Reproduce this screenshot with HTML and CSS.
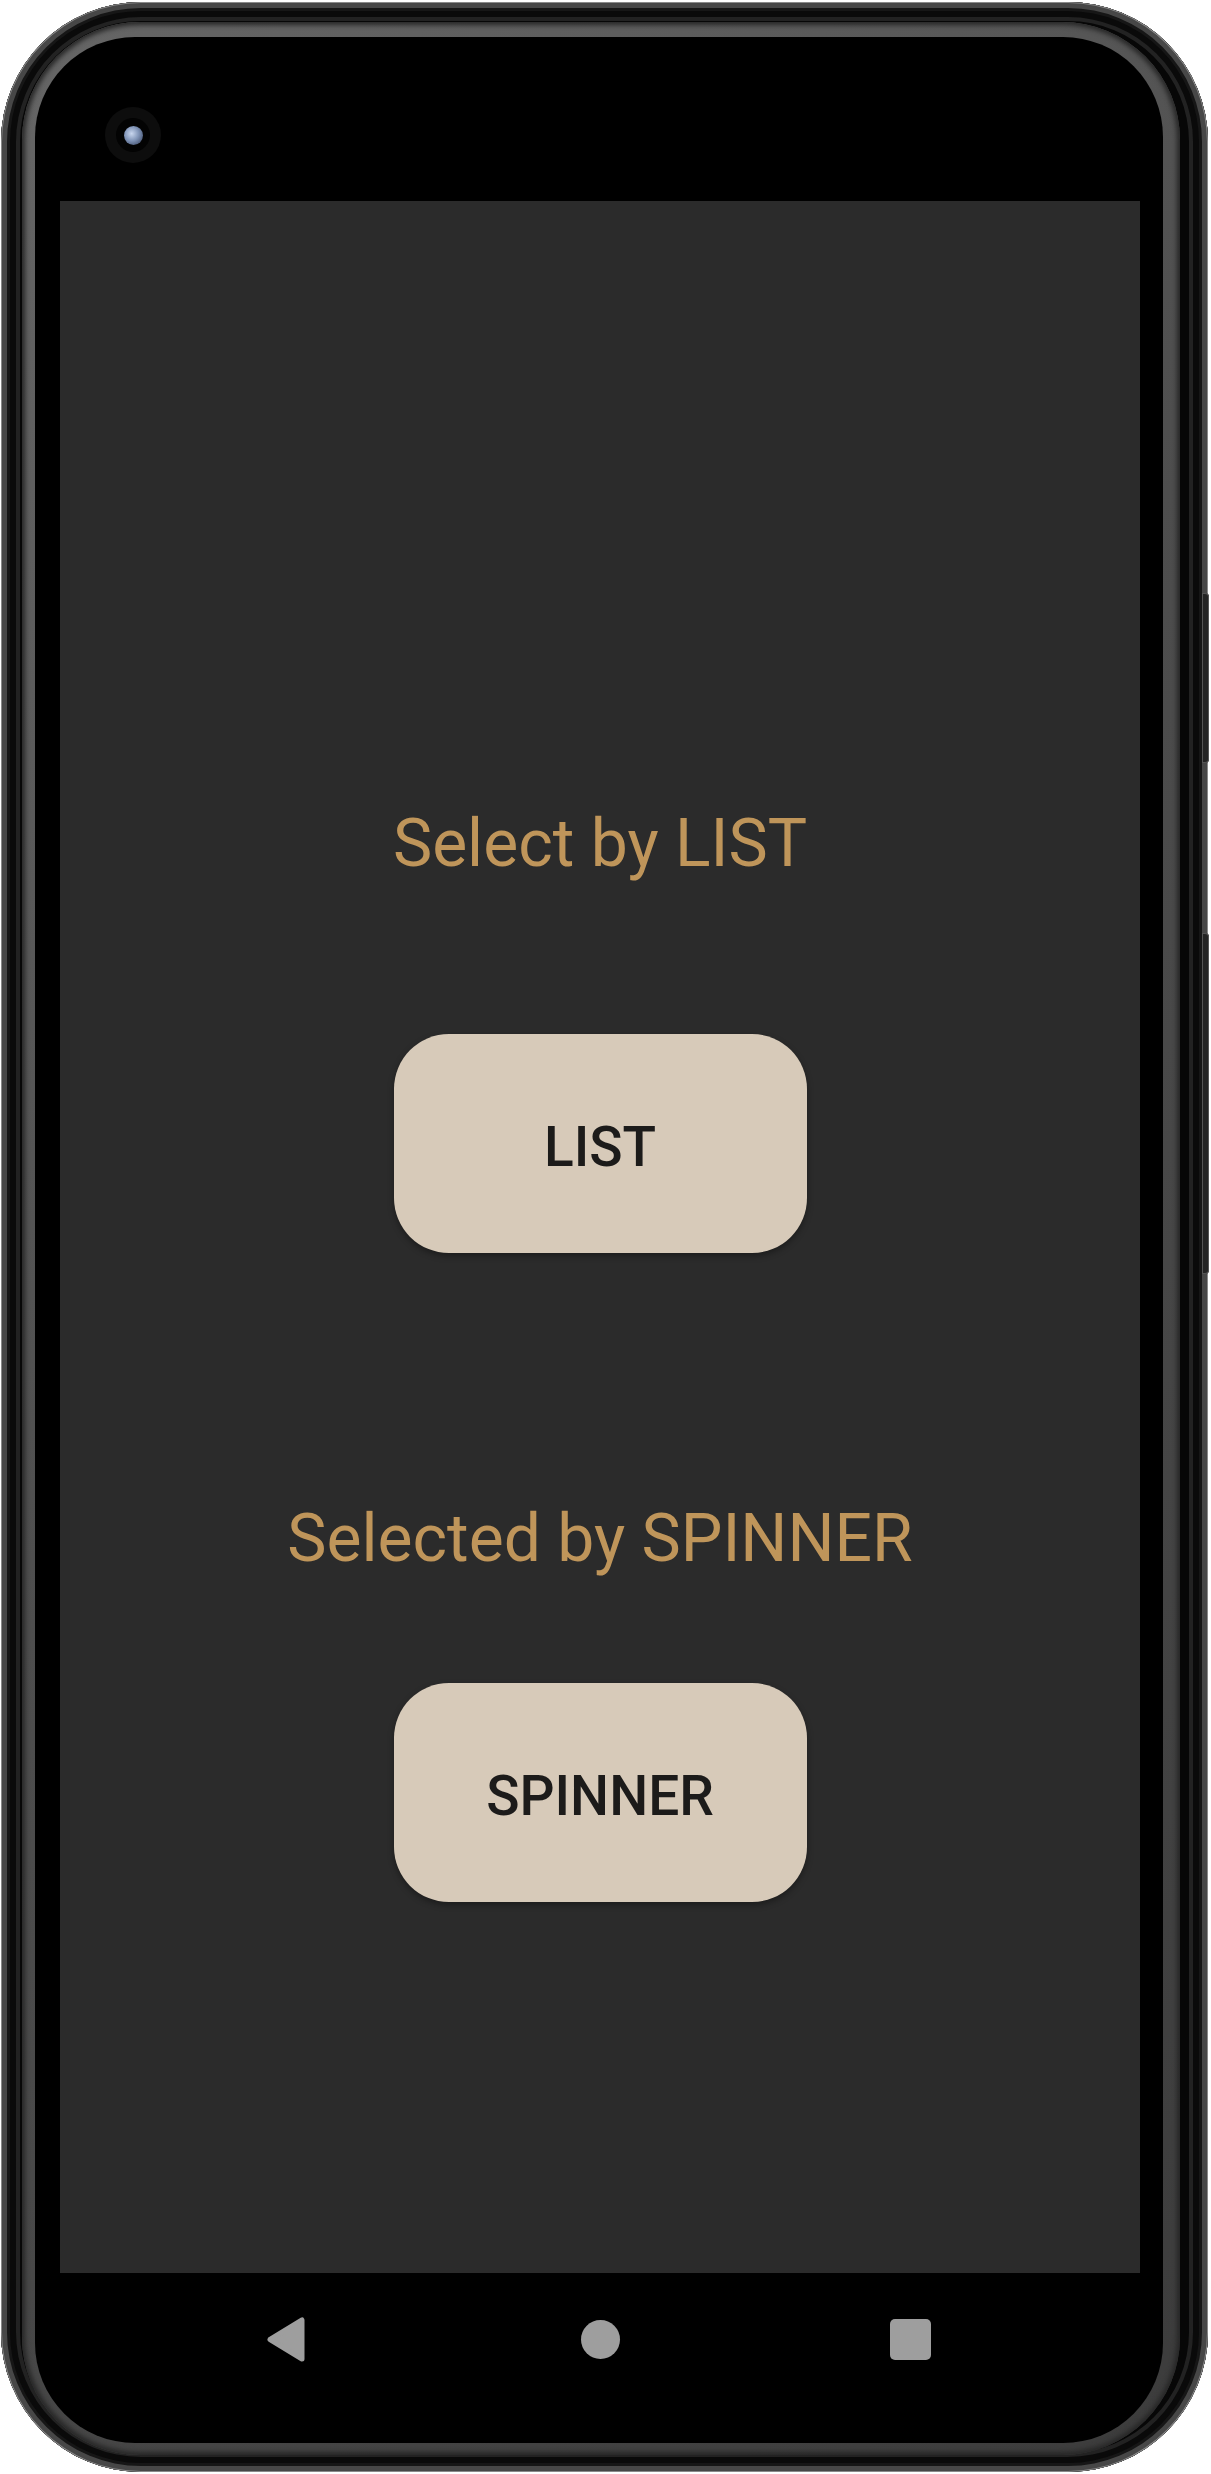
FILE: index.html
```html
<!DOCTYPE html>
<html lang="en">
<head>
<meta charset="utf-8">
<title>Select by LIST</title>
<link rel="stylesheet" href="styles.css">
</head>
<body>
<div class="phone">
  <div class="side-btn power"></div>
  <div class="side-btn volume"></div>
  <div class="band">
    <div class="glass">
      <div class="top-bezel">
        <div class="camera"><div class="camera-ring"><div class="lens"></div></div></div>
      </div>
      <main class="screen">
        <p class="label">Select by LIST</p>
        <button class="action action-list">LIST</button>
        <p class="label label-spinner">Selected by SPINNER</p>
        <button class="action action-spinner">SPINNER</button>
      </main>
      <nav class="navbar">
        <svg class="nav-back" width="38" height="45" viewBox="0 0 38 45"><polygon points="3,22.5 35,3 35,42" fill="#9e9e9e" stroke="#9e9e9e" stroke-width="5" stroke-linejoin="round"/></svg>
        <span class="nav-home"></span>
        <span class="nav-recents"></span>
      </nav>
    </div>
  </div>
</div>
</body>
</html>
```

FILE: styles.css
```css
html, body {
  margin: 0;
  padding: 0;
  background: #ffffff;
}

.phone {
  position: relative;
  box-sizing: border-box;
  width: 1207px;
  height: 2470px;
  margin: 2px 0 0 1px;
  padding: 20px 28px 17px 21px;
  border-radius: 140px;
  background: #070707;
  box-shadow:
    inset 0 0 0 1px #8a8a8a,
    inset 0 0 0 6px #474747,
    inset 0 0 0 9px #161616,
    inset 0 0 0 15px #0a0a0a,
    inset 0 0 0 19px #222222;
}

.side-btn {
  position: absolute;
  left: 1201px;
  width: 7px;
  border-radius: 0 4px 4px 0;
  background: #242424;
  box-shadow: inset 0 0 0 1px #555555;
}

.power {
  top: 591px;
  height: 170px;
}

.volume {
  top: 931px;
  height: 341px;
}

.band {
  box-sizing: border-box;
  height: 100%;
  padding: 15px 17px 12px 13px;
  border-radius: 118px;
  background: linear-gradient(135deg, #666666 0%, #4e4e4e 45%, #3c3c3c 100%);
  box-shadow: inset 0 0 5px 3px #262626;
}

.glass {
  box-sizing: border-box;
  height: 100%;
  padding: 0 23px 0 25px;
  border-radius: 100px;
  background: #000000;
  display: flex;
  flex-direction: column;
}

.top-bezel {
  height: 164px;
  flex: none;
  box-sizing: border-box;
  padding: 70px 0 0 45px;
}

.camera {
  width: 56px;
  height: 56px;
  border-radius: 50%;
  background: #0d0d0d;
  display: flex;
  align-items: center;
  justify-content: center;
}

.camera-ring {
  width: 34px;
  height: 34px;
  border-radius: 50%;
  background: #030303;
  display: flex;
  align-items: center;
  justify-content: center;
}

.lens {
  width: 19px;
  height: 19px;
  border-radius: 50%;
  background: radial-gradient(circle at 40% 40%, #c8d6ee 0%, #7f93b6 45%, #2a3550 100%);
}

.screen {
  flex: none;
  width: 1080px;
  height: 2072px;
  box-sizing: border-box;
  padding-top: 604px;
  background: #2b2b2b;
  display: flex;
  flex-direction: column;
  align-items: center;
}

.label {
  margin: 0;
  font-family: Roboto, "Noto Sans", sans-serif;
  font-weight: 400;
  font-size: 66px;
  line-height: 77px;
  color: #bf955a;
  white-space: nowrap;
}

.label-spinner {
  margin-top: 247px;
}

.action {
  box-sizing: border-box;
  width: 413px;
  height: 219px;
  margin: 0;
  padding: 7px 0 0 0;
  border: none;
  border-radius: 55px;
  background: #d7cab9;
  color: #1c1b1a;
  font-family: Roboto, "Noto Sans", sans-serif;
  font-weight: 500;
  font-size: 55px;
  letter-spacing: 0;
  box-shadow: 0 3px 6px rgba(0, 0, 0, 0.35);
}

.action-list {
  margin-top: 152px;
}

.action-spinner {
  margin-top: 106px;
}

.navbar {
  flex: none;
  height: 170px;
  box-sizing: border-box;
  padding: 0 0 37px 207px;
  display: flex;
  align-items: center;
}

.nav-back {
  display: block;
  flex: none;
}

.nav-home {
  flex: none;
  width: 39px;
  height: 39px;
  margin-left: 276px;
  border-radius: 50%;
  background: #9e9e9e;
}

.nav-recents {
  flex: none;
  width: 41px;
  height: 41px;
  margin-left: 270px;
  border-radius: 5px;
  background: #9e9e9e;
}
```
